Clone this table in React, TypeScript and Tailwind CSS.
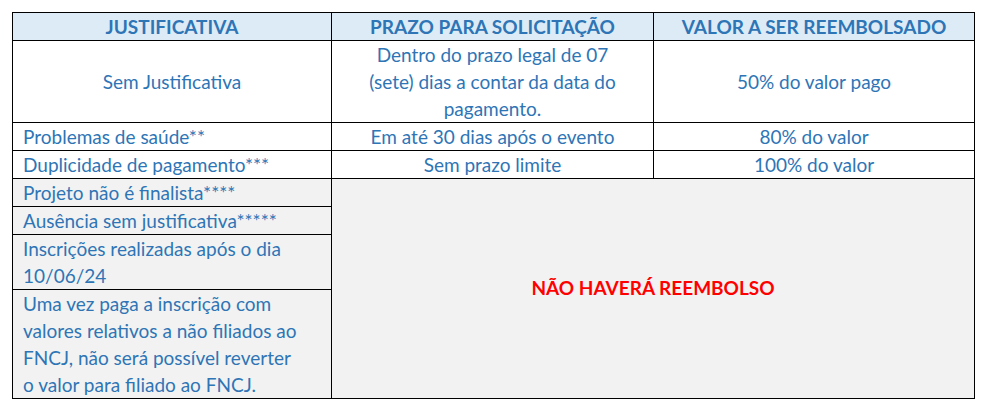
const blue = 'text-[#2E75B6]';

const cell = 'border border-black px-[10px] leading-[27px] text-[19px] ' + blue;

export default function App() {
  return (
    <div className="bg-white w-[983px] h-[407px] pt-[12px] pl-[12px]" style={{ fontFamily: 'Lato, "Open Sans", sans-serif' }}>
      <table className="border-collapse table-fixed w-[962px]">
        <colgroup>
          <col className="w-[319px]" />
          <col className="w-[322px]" />
          <col className="w-[321px]" />
        </colgroup>
        <thead>
          <tr className="h-[28px] bg-[#DDEBF7]">
            <th className={cell + ' font-bold text-center'}>JUSTIFICATIVA</th>
            <th className={cell + ' font-bold text-center'}>PRAZO PARA SOLICITAÇÃO</th>
            <th className={cell + ' font-bold text-center'}>VALOR A SER REEMBOLSADO</th>
          </tr>
        </thead>
        <tbody>
          <tr className="h-[81px]">
            <td className={cell + ' text-center'}>Sem Justificativa</td>
            <td className={cell + ' text-center leading-[26.5px]'}>
              Dentro do prazo legal de 07
              <br />
              (sete) dias a contar da data do
              <br />
              pagamento.
            </td>
            <td className={cell + ' text-center'}>50% do valor pago</td>
          </tr>
          <tr className="h-[28px]">
            <td className={cell}>Problemas de saúde**</td>
            <td className={cell + ' text-center'}>Em até 30 dias após o evento</td>
            <td className={cell + ' text-center'}>80% do valor</td>
          </tr>
          <tr className="h-[28px]">
            <td className={cell}>Duplicidade de pagamento***</td>
            <td className={cell + ' text-center'}>Sem prazo limite</td>
            <td className={cell + ' text-center'}>100% do valor</td>
          </tr>
          <tr className="h-[28px] bg-[#F2F2F2]">
            <td className={cell}>Projeto não é finalista****</td>
            <td
              colSpan={2}
              rowSpan={4}
              className="border border-black text-center text-[19px] font-bold text-[#FF0000]"
            >
              NÃO HAVERÁ REEMBOLSO
            </td>
          </tr>
          <tr className="h-[28px] bg-[#F2F2F2]">
            <td className={cell}>Ausência sem justificativa*****</td>
          </tr>
          <tr className="h-[55px] bg-[#F2F2F2]">
            <td className={cell}>
              Inscrições realizadas após o dia
              <br />
              10/06/24
            </td>
          </tr>
          <tr className="h-[108px] bg-[#F2F2F2]">
            <td className={cell}>
              Uma vez paga a inscrição com
              <br />
              valores relativos a não filiados ao
              <br />
              FNCJ, não será possível reverter
              <br />
              o valor para filiado ao FNCJ.
            </td>
          </tr>
        </tbody>
      </table>
    </div>
  );
}
